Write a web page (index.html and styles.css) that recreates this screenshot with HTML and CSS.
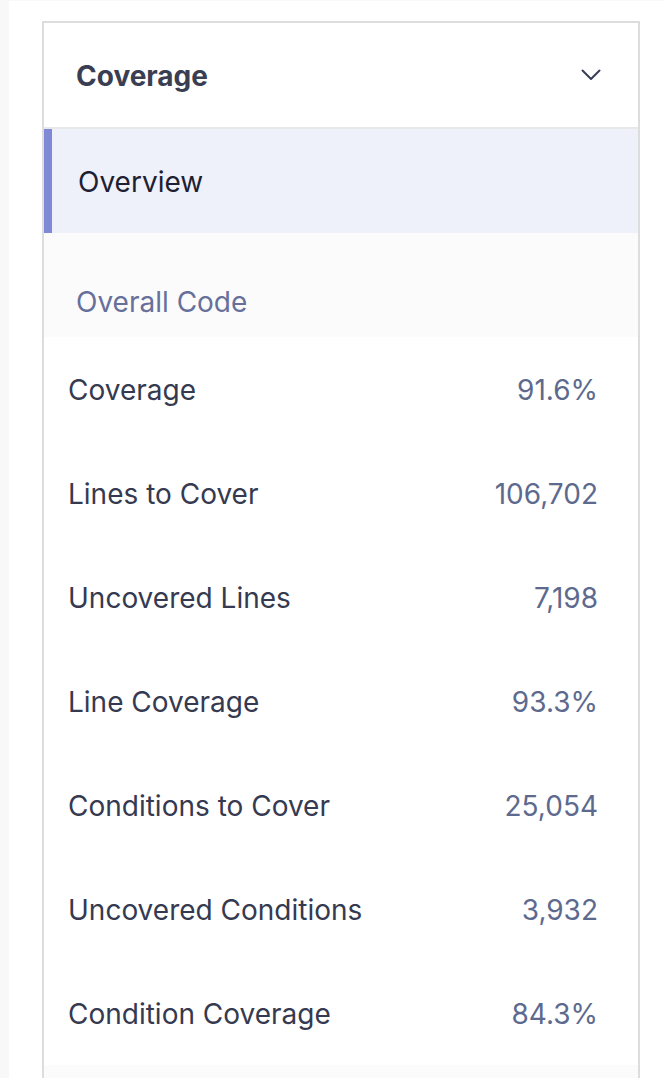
FILE: index.html
```html
<!DOCTYPE html>
<html>
<head>
<meta charset="utf-8">
<link rel="stylesheet" href="styles.css">
</head>
<body>
<div class="page">
  <section class="card">
    <header class="card-head">
      <h2 class="card-title">Coverage</h2>
      <svg class="chevron" width="20" height="12" viewBox="0 0 20 12"><path d="M1.5 1.5 L10 10 L18.5 1.5" fill="none" stroke="#3a3e52" stroke-width="2" stroke-linecap="round" stroke-linejoin="round"/></svg>
    </header>
    <div class="nav-item active">Overview</div>
    <div class="group-title">Overall Code</div>
    <ul class="metrics">
      <li class="metric"><span class="label">Coverage</span><span class="value">91.6%</span></li>
      <li class="metric"><span class="label">Lines to Cover</span><span class="value">106,702</span></li>
      <li class="metric"><span class="label">Uncovered Lines</span><span class="value">7,198</span></li>
      <li class="metric"><span class="label">Line Coverage</span><span class="value">93.3%</span></li>
      <li class="metric"><span class="label">Conditions to Cover</span><span class="value">25,054</span></li>
      <li class="metric"><span class="label">Uncovered Conditions</span><span class="value">3,932</span></li>
      <li class="metric"><span class="label">Condition Coverage</span><span class="value">84.3%</span></li>
    </ul>
    <div class="group-title next"></div>
  </section>
</div>
</body>
</html>
```

FILE: styles.css
```css
* { box-sizing: border-box; }
html, body { margin: 0; padding: 0; }
body {
  background: #f8f8f9;
  font-family: Inter, "Noto Sans", sans-serif;
  height: 1078px;
  overflow: hidden;
}
.page {
  margin: 1px 0 0 9px;
  background: #ffffff;
  padding: 20px 24px 0 33px;
  height: 1077px;
}
.card {
  width: 598px;
  border: 2px solid #dddddd;
  border-bottom: none;
  background: #ffffff;
}
.card-head {
  height: 106px;
  border-bottom: 2px solid #e8e8ea;
  display: flex;
  align-items: center;
  justify-content: space-between;
  padding: 2px 37px 0 32px;
}
.card-title {
  margin: 0;
  font-size: 28px;
  font-weight: 700;
  color: #3a3e52;
}
.chevron { display: block; margin-top: -2px; }
.nav-item {
  height: 104px;
  display: flex;
  align-items: center;
  padding: 2px 0 0 26px;
  font-size: 28px;
  color: #1d2032;
}
.nav-item.active {
  background: #eef1f9;
  border-left: 8px solid #7f89d6;
}
.group-title {
  height: 104px;
  background: #fbfbfb;
  display: flex;
  align-items: flex-end;
  padding: 0 0 18px 32px;
  font-size: 28px;
  color: #66709a;
}
.group-title.next { height: 40px; }
.metrics {
  list-style: none;
  margin: 0;
  padding: 0;
}
.metric {
  height: 104px;
  display: flex;
  align-items: center;
  justify-content: space-between;
  padding: 2px 40px 0 24px;
  font-size: 28px;
}
.label { color: #353a50; }
.value { color: #5d6a8e; }
```
